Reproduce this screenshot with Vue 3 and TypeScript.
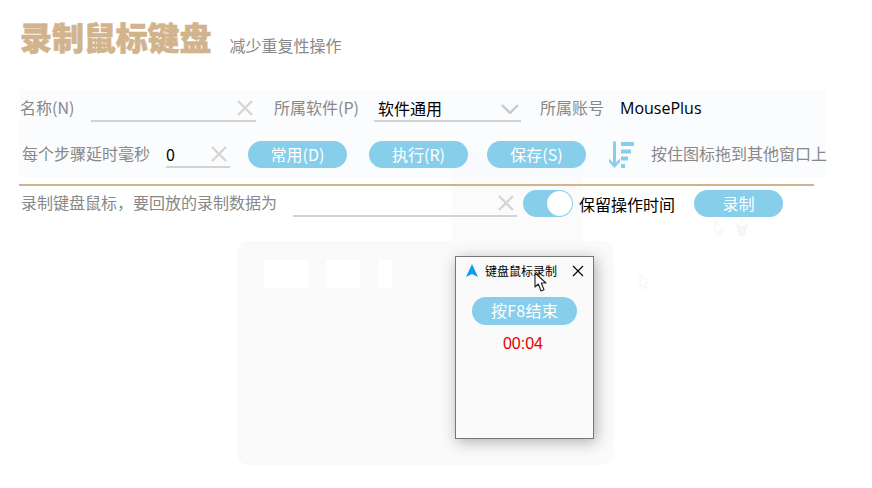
<script setup lang="ts">
const actions: string[] = ['常用(D)', '执行(R)', '保存(S)']
</script>

<template>
  <div class="page">
    <div class="ghost ghost-top"></div>
    <div class="ghost ghost-main">
      <div class="ghost-holes">
        <span class="hole h1"></span>
        <span class="hole h2"></span>
        <span class="hole h3"></span>
      </div>
    </div>
    <svg class="ghost-cursor gc1" viewBox="0 0 12 18" width="12" height="18"><path d="M1 1v13l3-3 2 5 2-1-2-5h4z" fill="#fff" stroke="#f4f4f6" /></svg>
    <svg class="ghost-cursor gc2" viewBox="0 0 12 18" width="12" height="18"><path d="M1 1v13l3-3 2 5 2-1-2-5h4z" fill="#fff" stroke="#f4f4f6" /></svg>
    <svg class="ghost-cursor gc3" viewBox="0 0 18 18" width="18" height="18"><path d="M9 1v4M3 5l3 5M15 5l-3 5M5 9h8l-2 8H7z" fill="#f7f7f8" stroke="#f5f5f6" stroke-width="2" /></svg>

    <main class="content">
      <header class="head">
        <h1 class="title">录制鼠标键盘</h1>
        <span class="subtitle">减少重复性操作</span>
      </header>

      <section class="panel">
        <div class="row first">
          <label class="label w-name">名称(N)</label>
          <div class="field w-165">
            <svg class="clear" viewBox="0 0 16 16" width="16" height="16"><path d="M1 1l14 14M15 1L1 15" /></svg>
          </div>
          <label class="label w-soft">所属软件(P)</label>
          <div class="field w-147">
            <span class="value">软件通用</span>
            <svg class="chevron" viewBox="0 0 18 10" width="18" height="10"><path d="M1 1l8 8 8-8" /></svg>
          </div>
          <label class="label w-acct">所属账号</label>
          <span class="value account">MousePlus</span>
        </div>

        <div class="row second">
          <label class="label w-step">每个步骤延时毫秒</label>
          <div class="field w-64">
            <span class="value">0</span>
            <svg class="clear" viewBox="0 0 16 16" width="16" height="16"><path d="M1 1l14 14M15 1L1 15" /></svg>
          </div>
          <div class="actions">
            <button v-for="a in actions" :key="a" class="pill wide" type="button">{{ a }}</button>
          </div>
          <svg class="sort" viewBox="0 0 26 28" width="26" height="28">
            <path d="M5 0.500h3v21l4-4v3.500l-5.500 6-5.500-6v-3.500l4 4z" />
            <rect x="13" y="1" width="13" height="4" />
            <rect x="13" y="8.500" width="10" height="4" />
            <rect x="13" y="15.500" width="7" height="4" />
            <rect x="13" y="23" width="4" height="4" />
          </svg>
          <span class="label hint">按住图标拖到其他窗口上</span>
        </div>
      </section>

      <div class="divider"></div>

      <div class="row third">
        <label class="label w-rec">录制键盘鼠标，要回放的录制数据为</label>
        <div class="field w-224">
          <svg class="clear" viewBox="0 0 16 16" width="16" height="16"><path d="M1 1l14 14M15 1L1 15" /></svg>
        </div>
        <span class="toggle"><span class="knob"></span></span>
        <span class="value keep">保留操作时间</span>
        <button class="pill record" type="button">录制</button>
      </div>
    </main>

    <aside class="popup">
      <div class="popup-bar">
        <svg class="arrow" viewBox="0 0 12 13" width="12" height="13"><path d="M6 0l6 13-6-3-6 3z" /></svg>
        <span class="popup-title">键盘鼠标录制</span>
        <svg class="close" viewBox="0 0 12 12" width="12" height="12"><path d="M1 1l10 10M11 1L1 11" /></svg>
      </div>
      <button class="pill stop" type="button">按F8结束</button>
      <div class="timer">00:04</div>
    </aside>

    <svg class="cursor" viewBox="0 0 13 20" width="13" height="20">
      <path d="M1 1v14l3.300-3 2.700 7 3-1.200-2.700-6.800H12z" fill="#fff" stroke="#222" stroke-width="1.100" stroke-linejoin="round" />
    </svg>
  </div>
</template>

<style scoped>
.page {
  position: relative;
  width: 872px;
  height: 488px;
  overflow: hidden;
  background: #fff;
  font-family: "Noto Sans CJK SC", "Noto Sans", sans-serif;
  font-size: 16px;
}
.content {
  position: relative;
  z-index: 1;
}
.head {
  display: flex;
  align-items: flex-start;
  height: 90px;
  box-sizing: border-box;
  padding: 13px 0 0 20px;
}
.title {
  margin: 0;
  font-size: 32px;
  line-height: 46px;
  font-weight: 900;
  color: #d2b48c;
  letter-spacing: -0.1px;
  -webkit-text-stroke: 0.6px #d2b48c;
}
.subtitle {
  margin: 20px 0 0 18px;
  font-size: 16px;
  line-height: 24px;
  color: #888;
}
.panel {
  margin-left: 19px;
  width: 807px;
  height: 88px;
  box-sizing: border-box;
  padding-top: 5px;
  background: rgba(247, 250, 253, 0.6);
}
.row {
  display: flex;
  align-items: stretch;
  height: 27px;
}
.first {
  padding-left: 1px;
}
.second {
  margin-top: 19px;
  padding-left: 3px;
}
.third {
  margin: 4px 0 0 21px;
}
.label {
  display: flex;
  align-items: center;
  flex: none;
  color: #888;
  white-space: nowrap;
  line-height: 24px;
  padding-bottom: 3px;
  box-sizing: border-box;
}
.w-name { width: 71px; }
.w-soft { width: 100px; margin-left: 18px; }
.w-acct { width: 80px; margin-left: 19px; }
.w-step { width: 128px; }
.w-rec { width: 256px; }
.field {
  position: relative;
  display: flex;
  align-items: center;
  flex: none;
  box-sizing: border-box;
  border-bottom: 2px solid #d3d3d3;
  padding-left: 4px;
}
.w-165 { width: 165px; }
.w-147 { width: 147px; }
.w-64 { width: 64px; margin-left: 16px; padding-left: 0; }
.w-224 { width: 224px; margin-left: 16px; }
.value {
  color: #000;
  line-height: 24px;
  white-space: nowrap;
}
.account {
  display: flex;
  align-items: center;
  font-family: "Open Sans", "Noto Sans", sans-serif;
  padding-bottom: 1px;
}
.clear {
  position: absolute;
  right: 3px;
  top: 5px;
  fill: none;
  stroke: #d6d6d6;
  stroke-width: 2.400;
}
.chevron {
  position: absolute;
  right: 2px;
  top: 9px;
  fill: none;
  stroke: #c8c8c8;
  stroke-width: 2.400;
}
.actions {
  display: flex;
  gap: 22px;
  margin-left: 18px;
}
.pill {
  border: none;
  padding: 0 0 2px;
  border-radius: 14px;
  background: #87ceeb;
  color: #fff;
  font: inherit;
  line-height: 24px;
  height: 27px;
  flex: none;
}
.wide { width: 99px; }
.actions .pill:last-child { margin-left: -3px; }
.sort {
  flex: none;
  margin-left: 22px;
  fill: #87ceeb;
}
.hint {
  margin-left: 17px;
}
.divider {
  margin: 6px 0 0 19px;
  width: 795px;
  height: 2px;
  background: #d2b48c;
}
.toggle {
  flex: none;
  display: flex;
  justify-content: flex-end;
  box-sizing: border-box;
  width: 50px;
  height: 27px;
  margin-left: 6px;
  padding: 1px;
  border-radius: 14px;
  background: #87ceeb;
}
.knob {
  width: 25px;
  height: 25px;
  border-radius: 50%;
  background: #fff;
}
.keep {
  display: flex;
  align-items: center;
  flex: none;
  margin-left: 6px;
  width: 96px;
}
.record {
  width: 89px;
  margin-left: 19px;
}
.ghost {
  position: absolute;
  background: #fafafa;
}
.ghost-top {
  left: 452px;
  top: 152px;
  width: 131px;
  height: 90px;
  border-radius: 6px;
  background: #fbfbfc;
}
.ghost-main {
  left: 237px;
  top: 241px;
  width: 377px;
  height: 224px;
  border-radius: 12px;
}
.ghost-holes {
  position: absolute;
  left: 27px;
  top: 19px;
  display: flex;
  gap: 18px;
}
.hole {
  display: block;
  height: 28px;
  background: #fff;
}
.h1 { width: 44px; }
.h2 { width: 34px; }
.h3 { width: 14px; }
.ghost-cursor {
  position: absolute;
  z-index: 0;
}
.gc1 { left: 639px; top: 273px; }
.gc2 { left: 714px; top: 220px; }
.gc3 { left: 733px; top: 218px; }
.popup {
  position: absolute;
  z-index: 2;
  left: 455px;
  top: 256px;
  display: flex;
  flex-direction: column;
  align-items: center;
  width: 139px;
  height: 183px;
  box-sizing: border-box;
  border: 1px solid #777;
  background: #fafafa;
  box-shadow: 2px 3px 14px rgba(0, 0, 0, 0.3);
}
.popup-bar {
  display: flex;
  align-items: center;
  align-self: stretch;
  height: 26px;
  padding: 0 0 0 10px;
}
.arrow { flex: none; fill: #0f9bf0; }
.popup-title {
  margin-left: 7px;
  width: 72px;
  font-size: 12px;
  color: #000;
  white-space: nowrap;
}
.close {
  flex: none;
  margin: 2px 0 0 15px;
  fill: none;
  stroke: #000;
  stroke-width: 1.100;
}
.stop {
  width: 105px;
  height: 28px;
  margin-top: 14px;
  letter-spacing: 0.3px;
}
.timer {
  margin-top: 8px;
  margin-right: 3px;
  font-family: "Liberation Sans", sans-serif;
  font-size: 16px;
  line-height: 22px;
  color: #e60000;
}
.cursor {
  position: absolute;
  z-index: 3;
  left: 534px;
  top: 272px;
}
</style>
